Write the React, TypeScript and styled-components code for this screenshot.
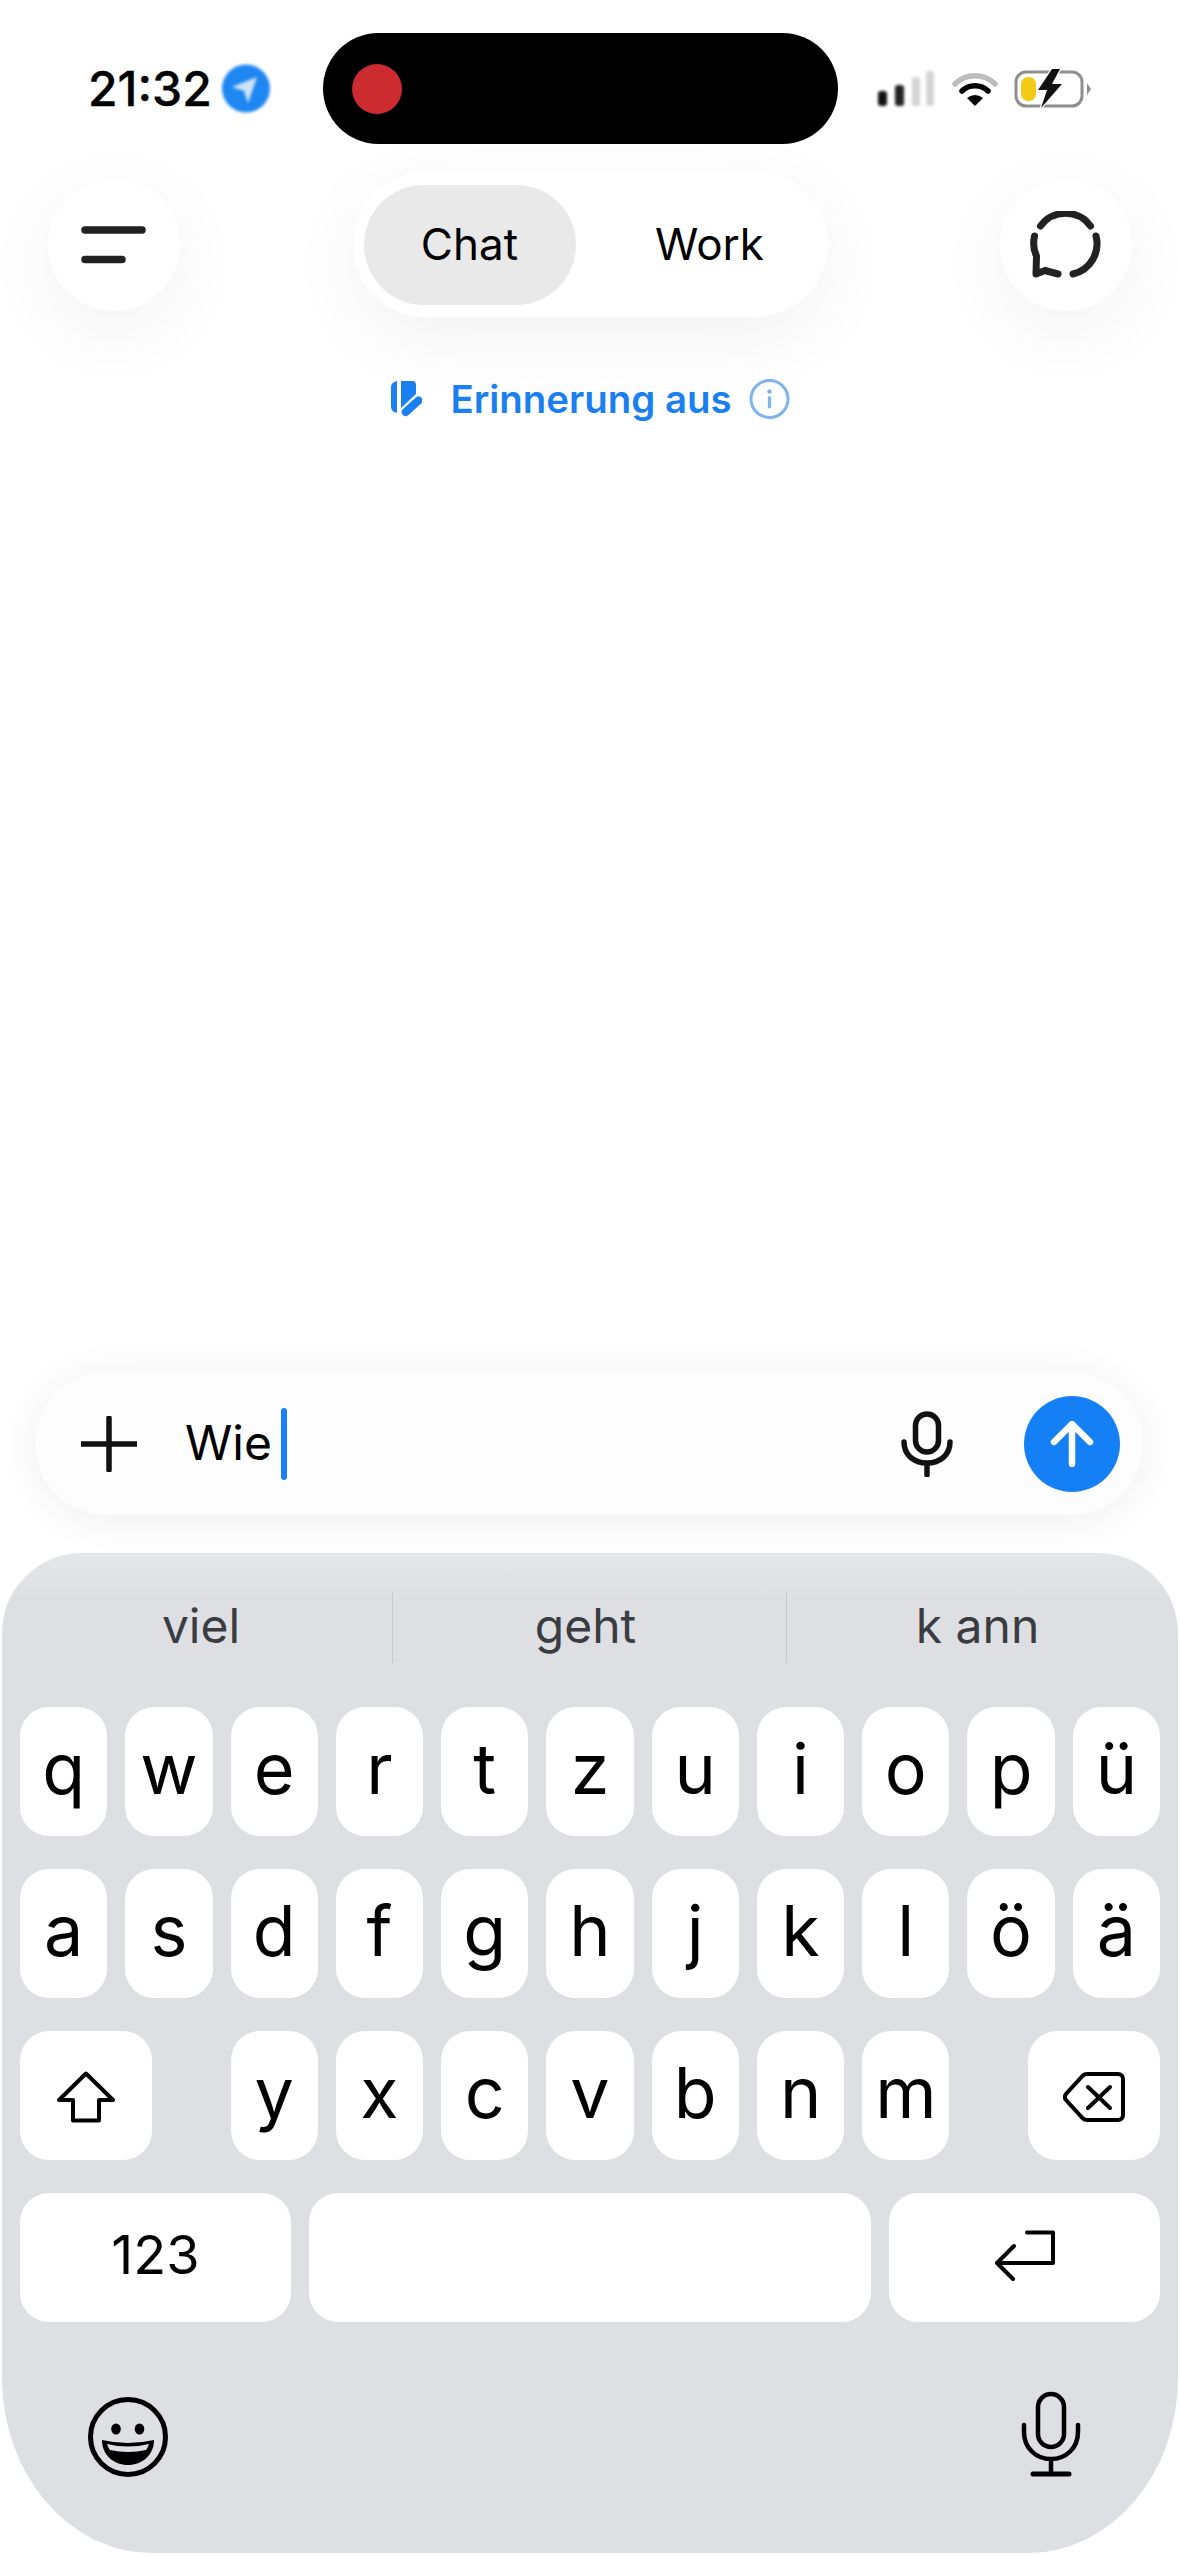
import React from "react";
import styled, { createGlobalStyle } from "styled-components";

const ROW_ONE = ["q", "w", "e", "r", "t", "z", "u", "i", "o", "p", "ü"];
const ROW_TWO = ["a", "s", "d", "f", "g", "h", "j", "k", "l", "ö", "ä"];
const ROW_THREE = ["y", "x", "c", "v", "b", "n", "m"];
const SUGGESTIONS = ["viel", "geht", "k ann"];

const App: React.FC = () => {
  return (
    <Page>
      <GlobalStyle />
      <StatusBar>
        <StatusLeft>
          <Time>21:32</Time>
          <LocationBadge>
            <svg width="50" height="51" viewBox="0 0 50 51">
              <circle cx="25" cy="25.5" r="24" fill="#1f87f2" />
              <path d="M36 14 L11 24 L23 28 L27 40 Z" fill="#cfe3f8" />
            </svg>
          </LocationBadge>
        </StatusLeft>
        <Island>
          <RecordDot />
        </Island>
        <StatusRight>
          <SignalIcon />
          <WifiIcon />
          <BatteryIcon />
        </StatusRight>
      </StatusBar>

      <Header>
        <RoundButton>
          <svg width="66" height="38" viewBox="0 0 66 38">
            <path d="M4 4 H61 M4 33.5 H41" stroke="#222" strokeWidth="7.5" strokeLinecap="round" />
          </svg>
        </RoundButton>
        <Segments>
          <Segment $active>Chat</Segment>
          <Segment>Work</Segment>
        </Segments>
        <RoundButton>
          <svg width="72" height="68" viewBox="0 0 72 68" fill="none">
            <path
              d="M10.5 15 A31 31 0 0 1 60.5 15 M66 25 A31 31 0 0 1 43 63 M4.5 25 C3 32 3.500 39 6.500 45 L6 63 L15 59.500 L28 63"
              stroke="#222"
              strokeWidth="7"
              strokeLinecap="round"
              strokeLinejoin="round"
            />
          </svg>
        </RoundButton>
      </Header>

      <MemoryRow>
        <svg width="32" height="38" viewBox="0 0 32 38">
          <path d="M7 1 V33 C3 32 1 30 1 26 V7 C1 4 3 2 7 1Z" fill="#1a7ff0" />
          <path d="M11 1 H23 C25 1 26 3 26 5 V14 L11 28 Z" fill="#1a7ff0" />
          <path d="M15.7 32 L28.5 20.5" stroke="#1a7ff0" strokeWidth="8" strokeLinecap="round" />
        </svg>
        <MemoryText>Erinnerung aus</MemoryText>
        <svg width="41" height="40" viewBox="0 0 41 40" fill="none">
          <circle cx="20.5" cy="20" r="18.5" stroke="#7fb4ec" strokeWidth="3" />
          <circle cx="20.5" cy="12.5" r="2.2" fill="#7fb4ec" />
          <path d="M20.5 18.5 V28" stroke="#7fb4ec" strokeWidth="3.2" strokeLinecap="round" />
        </svg>
      </MemoryRow>

      <Spacer />

      <Composer>
        <svg width="56" height="56" viewBox="0 0 56 56">
          <path d="M28 2 V54 M1 28 H55" stroke="#111" strokeWidth="5.5" strokeLinecap="round" />
        </svg>
        <ComposerText>Wie</ComposerText>
        <Caret />
        <ComposerGrow />
        <svg width="52" height="66" viewBox="0 0 52 66" fill="none">
          <rect x="14.5" y="3" width="23" height="38" rx="11.5" stroke="#111" strokeWidth="5.5" />
          <path d="M3 31 C3 44 13 52 26 52 C39 52 49 44 49 31 M26 52 V64" stroke="#111" strokeWidth="5.5" strokeLinecap="round" />
        </svg>
        <SendButton>
          <svg width="44" height="46" viewBox="0 0 44 46" fill="none">
            <path d="M22 43 V4 M4 21 L22 3 L40 21" stroke="#fff" strokeWidth="6.5" strokeLinecap="round" strokeLinejoin="round" />
          </svg>
        </SendButton>
      </Composer>

      <Keyboard>
        <SuggestionBar>
          {SUGGESTIONS.map((word) => (
            <Suggestion key={word}>{word}</Suggestion>
          ))}
        </SuggestionBar>
        <KeyGrid>
          {ROW_ONE.map((letter) => (
            <Key key={letter}>{letter}</Key>
          ))}
        </KeyGrid>
        <KeyGrid>
          {ROW_TWO.map((letter) => (
            <Key key={letter}>{letter}</Key>
          ))}
        </KeyGrid>
        <ShiftRow>
          <ActionKey>
            <svg width="60" height="52" viewBox="0 0 60 52" fill="none">
              <path
                d="M30 2.5 L57 29 H43 V49.5 H17 V29 H3 Z"
                stroke="#000"
                strokeWidth="4"
                strokeLinejoin="round"
              />
            </svg>
          </ActionKey>
          <LetterGroup>
            {ROW_THREE.map((letter) => (
              <Key key={letter}>{letter}</Key>
            ))}
          </LetterGroup>
          <ActionKey>
            <svg width="62" height="50" viewBox="0 0 62 50" fill="none">
              <path
                d="M24 2 H55 C58 2 60 4 60 7 V43 C60 46 58 48 55 48 H24 C22.500 48 21 47.500 20 46.500 L3 28 C1.500 26 1.500 24 3 22 L20 3.500 C21 2.500 22.500 2 24 2 Z"
                stroke="#000"
                strokeWidth="4"
              />
              <path d="M25 15 L47 36 M47 15 L25 36" stroke="#000" strokeWidth="4" strokeLinecap="round" />
            </svg>
          </ActionKey>
        </ShiftRow>
        <BottomRow>
          <NumberKey>123</NumberKey>
          <SpaceKey />
          <ReturnKey>
            <svg width="62" height="52" viewBox="0 0 62 52" fill="none">
              <path
                d="M33 3.500 H59 V34 H3 M20 17 L3 34 L19 50"
                stroke="#000"
                strokeWidth="4"
                strokeLinecap="round"
                strokeLinejoin="round"
              />
            </svg>
          </ReturnKey>
        </BottomRow>
        <SystemRow>
          <svg width="80" height="80" viewBox="0 0 80 80" fill="none">
            <circle cx="40" cy="40" r="37.500" stroke="#000" strokeWidth="5" />
            <ellipse cx="28" cy="32" rx="4.800" ry="5.500" fill="#000" />
            <ellipse cx="51.500" cy="32" rx="4.800" ry="5.500" fill="#000" />
            <path d="M14 43 Q40 49 66 43 C66 58 54 68 40 68 C26 68 14 58 14 43Z" fill="#000" />
            <path d="M19 47 Q40 52 61 47 C60 50 59 52 58 53 Q40 57 22 53 C21 52 20 50 19 47Z" fill="#dddfe3" />
          </svg>
          <svg width="60" height="86" viewBox="0 0 60 86" fill="none">
            <rect x="17" y="3" width="26" height="53" rx="13" stroke="#000" strokeWidth="4.500" />
            <path d="M3 34 V41 C3 57 15 68 30 68 C45 68 57 57 57 41 V34 M30 68 V83" stroke="#000" strokeWidth="4.500" strokeLinecap="round" />
            <path d="M12 83 H48" stroke="#000" strokeWidth="5" strokeLinecap="round" />
          </svg>
        </SystemRow>
      </Keyboard>
    </Page>
  );
};

const SignalIcon = () => (
  <SignalWrap>
    <svg width="60" height="37" viewBox="0 0 60 37">
      <rect x="2" y="21" width="9" height="15" rx="3" fill="#111" />
      <rect x="19" y="15" width="9" height="21" rx="3" fill="#222" />
      <rect x="36" y="7" width="8" height="29" rx="3" fill="#d4d4d4" />
      <rect x="50" y="1" width="8" height="35" rx="3" fill="#d4d4d4" />
    </svg>
  </SignalWrap>
);

const WifiIcon = () => (
  <svg width="46" height="36" viewBox="0 0 46 36" fill="none">
    <path d="M3 13 C14 2 32 2 43 13" stroke="#bdbdbd" strokeWidth="5.500" strokeLinecap="round" />
    <path d="M10 20 C17 13 29 13 36 20" stroke="#000" strokeWidth="5.500" strokeLinecap="round" />
    <path d="M15 27 Q23 21 31 27 L23 35 Z" fill="#000" />
  </svg>
);

const BatteryIcon = () => (
  <svg width="78" height="40" viewBox="0 0 78 40" fill="none">
    <rect x="2" y="3" width="66" height="34" rx="10" stroke="#8f8f8f" strokeWidth="3" />
    <rect x="7" y="8" width="15" height="24" rx="7" fill="#f4cb14" />
    <path d="M73 14 L77 20 L73 26 Z" fill="#8f8f8f" />
    <path d="M38 0 L24 21 H33 L27 39 L48 15 H38 L46 0 Z" fill="#111" stroke="#fff" strokeWidth="2.500" strokeLinejoin="round" paintOrder="stroke" />
  </svg>
);

export default App;

const GlobalStyle = createGlobalStyle`
  html, body {
    margin: 0;
    padding: 0;
    background: #fff;
  }
  svg {
    display: block;
    flex: none;
  }
`;

const Page = styled.div`
  width: 1180px;
  height: 2556px;
  display: flex;
  flex-direction: column;
  overflow: hidden;
  background: #fff;
  font-family: Inter, "Liberation Sans", sans-serif;
  color: #000;
`;

const StatusBar = styled.div`
  display: flex;
  align-items: center;
  height: 111px;
  margin-top: 33px;
`;

const StatusLeft = styled.div`
  display: flex;
  align-items: center;
  gap: 9px;
  width: 323px;
  padding-left: 88px;
  box-sizing: border-box;
`;

const Time = styled.span`
  font-size: 48px;
  font-weight: 500;
  line-height: 1;
  -webkit-text-stroke: 0.4px #000;
`;

const LocationBadge = styled.div`
  filter: blur(1.5px);
`;

const Island = styled.div`
  display: flex;
  align-items: center;
  width: 515px;
  height: 111px;
  padding-left: 29px;
  box-sizing: border-box;
  border-radius: 56px;
  background: #000;
`;

const RecordDot = styled.div`
  width: 50px;
  height: 50px;
  border-radius: 50%;
  background: #cc2b30;
`;

const StatusRight = styled.div`
  display: flex;
  align-items: center;
  gap: 16px;
  padding-left: 38px;
`;

const SignalWrap = styled.div`
  filter: blur(1.8px);
`;

const Header = styled.div`
  display: flex;
  align-items: center;
  justify-content: space-between;
  height: 145px;
  margin-top: 28px;
  padding: 0 48px;
`;

const RoundButton = styled.div`
  display: flex;
  align-items: center;
  justify-content: center;
  width: 132px;
  height: 132px;
  border-radius: 50%;
  background: #fff;
  box-shadow: 0 20px 80px rgba(0, 0, 0, 0.055);
`;

const Segments = styled.div`
  display: flex;
  align-items: center;
  gap: 28px;
  width: 475px;
  height: 145px;
  padding: 0 11px;
  box-sizing: border-box;
  border-radius: 72px;
  background: #fff;
  box-shadow: 0 20px 80px rgba(0, 0, 0, 0.055);
`;

const Segment = styled.div<{ $active?: boolean }>`
  display: flex;
  align-items: center;
  justify-content: center;
  width: 212px;
  height: 120px;
  padding-bottom: 2px;
  box-sizing: border-box;
  border-radius: 60px;
  font-size: 44px;
  background: ${(p) => (p.$active ? "#e9e9e9" : "transparent")};
`;

const MemoryRow = styled.div`
  display: flex;
  align-items: center;
  justify-content: center;
  gap: 28px;
  height: 40px;
  margin-top: 62px;
`;

const MemoryText = styled.span`
  margin-right: -11px;
  font-size: 38.4px;
  font-weight: 600;
  color: #1a7ff0;
`;

const Spacer = styled.div`
  flex: 1;
`;

const Composer = styled.div`
  display: flex;
  align-items: center;
  height: 143px;
  margin: 0 37px 38px 35px;
  padding: 0 23px 0 46px;
  border-radius: 72px;
  background: #fdfdfd;
  box-shadow: 0 4px 44px rgba(0, 0, 0, 0.065);
`;

const ComposerText = styled.span`
  margin-left: 48px;
  padding-bottom: 2px;
  font-size: 48px;
`;

const Caret = styled.div`
  width: 6px;
  height: 72px;
  margin-left: 9px;
  border-radius: 3px;
  background: #1a7ff0;
`;

const ComposerGrow = styled.div`
  flex: 1;
`;

const SendButton = styled.div`
  display: flex;
  align-items: center;
  justify-content: center;
  width: 96px;
  height: 96px;
  margin-left: 71px;
  border-radius: 50%;
  background: #1580f5;
`;

const Keyboard = styled.div`
  height: 1000px;
  margin: 0 2px 3px;
  padding: 39px 18px 0;
  box-sizing: border-box;
  border-radius: 80px 80px 150px 150px / 80px 80px 175px 175px;
  background: linear-gradient(#e5e6e9, #dddfe3 50px);
`;

const SuggestionBar = styled.div`
  display: grid;
  grid-template-columns: 374px 394px 390px;
  height: 71px;
  margin: 0 -18px 44px -2px;
`;

const Suggestion = styled.div`
  display: flex;
  align-items: center;
  justify-content: center;
  padding: 0 8px 5px 0;
  font-size: 48px;
  color: #3b3c42;
  & + & {
    border-left: 1.5px solid #c6c8cc;
  }
`;

const KeyGrid = styled.div`
  display: grid;
  grid-template-columns: repeat(11, 1fr);
  gap: 18px;
  margin-bottom: 33px;
`;

const Key = styled.div`
  display: flex;
  align-items: center;
  justify-content: center;
  height: 129px;
  padding-bottom: 6px;
  box-sizing: border-box;
  border-radius: 29px;
  background: #fff;
  font-size: 70px;
  line-height: 1;
`;

const ShiftRow = styled.div`
  display: flex;
  justify-content: space-between;
  margin-bottom: 33px;
`;

const LetterGroup = styled.div`
  display: grid;
  grid-template-columns: repeat(7, 1fr);
  gap: 18px;
  width: 719px;
`;

const ActionKey = styled(Key)`
  width: 132px;
  padding: 2px 0 0;
`;

const BottomRow = styled.div`
  display: flex;
  gap: 18px;
`;

const NumberKey = styled(Key)`
  width: 271px;
  font-size: 54px;
`;

const SpaceKey = styled(Key)`
  flex: 1;
`;

const ReturnKey = styled(Key)`
  width: 271px;
`;

const SystemRow = styled.div`
  display: flex;
  align-items: flex-end;
  justify-content: space-between;
  margin-top: 69px;
  padding: 0 79px 0 68px;
`;
